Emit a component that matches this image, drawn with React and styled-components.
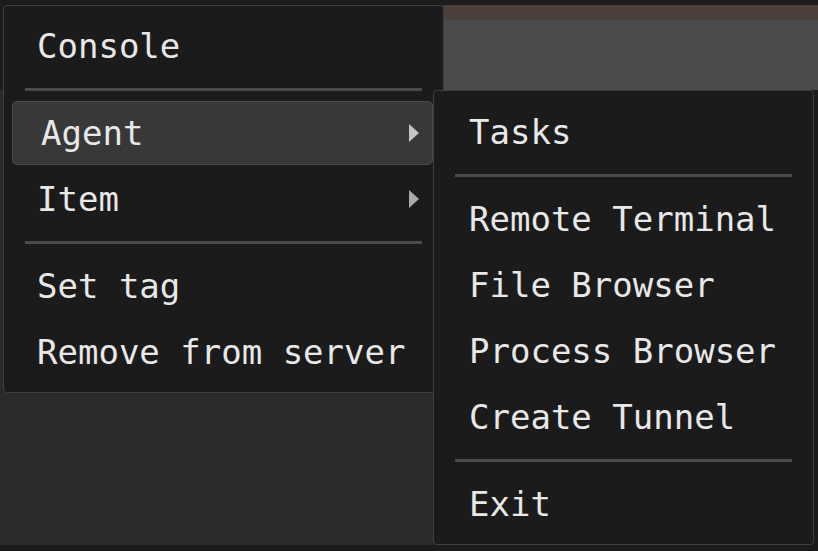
import React from 'react';
import styled, { createGlobalStyle } from 'styled-components';

const GlobalStyle = createGlobalStyle`
  html, body {
    margin: 0;
    padding: 0;
    background: #1b1b1b;
  }
  body {
    width: 818px;
    height: 551px;
    overflow: hidden;
    font-family: "DejaVu Sans Mono", "Liberation Mono", monospace;
  }
`;

const Screen = styled.div`
  position: relative;
  width: 818px;
  height: 551px;
  box-sizing: border-box;
  padding: 5px 0 6px;
  display: grid;
  grid-template-columns: 443px 1fr;
  grid-template-rows: 85px 1fr;
`;

const Blank = styled.div`
  background: #1b1b1b;
`;

const Viewport = styled.div`
  display: flex;
  flex-direction: column;
  background: #4a4a4a;
`;

const TitleStrip = styled.div`
  height: 15px;
  background: #4c403d;
`;

const Panel = styled.div`
  background: #2a2a2a;
`;

const Item = styled.div`
  height: 64px;
  margin: 1px 0;
  box-sizing: border-box;
  display: flex;
  align-items: center;
  justify-content: space-between;
  padding: 0 12px 0 ${(p) => (p.$active ? 28 : 24)}px;
  border: 1px solid ${(p) => (p.$active ? '#4a4a4a' : 'transparent')};
  border-radius: 5px;
  background: ${(p) => (p.$active ? '#383838' : 'transparent')};
  color: #e8e8e8;
  font-size: 34px;
  white-space: nowrap;
`;

const Menu = styled.div`
  position: absolute;
  left: ${(p) => p.$left}px;
  top: ${(p) => p.$top}px;
  width: ${(p) => p.$width}px;
  box-sizing: border-box;
  padding: ${(p) => p.$padTop}px 10px 7px 8px;
  background: #1b1b1b;
  border: 1px solid #3e3e3e;
  border-radius: 4px;
  display: flex;
  flex-direction: column;

  ${Item} > span {
    margin-left: ${(p) => p.$indent}px;
  }
`;

const Separator = styled.div`
  height: 3px;
  margin: 9px 11px 9px 13px;
  background: #4a4a4a;
`;

const Arrow = ({ color }) => (
  <svg width="12" height="20" viewBox="0 0 12 20">
    <path d="M1 1 L11 10 L1 19 Z" fill={color} />
  </svg>
);

const MenuEntry = ({ label, active, sub }) => (
  <Item $active={active}>
    <span>{label}</span>
    {sub && <Arrow color={active ? '#c4c4c4' : '#a9a9a9'} />}
  </Item>
);

export default function App() {
  return (
    <>
      <GlobalStyle />
      <Screen>
        <Blank />
        <Viewport>
          <TitleStrip />
        </Viewport>
        <Panel />
        <Blank />

        <Menu $left={3} $top={5} $width={441} $padTop={7} $indent={0}>
          <MenuEntry label="Console" />
          <Separator />
          <MenuEntry label="Agent" active sub />
          <MenuEntry label="Item" sub />
          <Separator />
          <MenuEntry label="Set tag" />
          <MenuEntry label="Remove from server" />
        </Menu>

        <Menu $left={433} $top={90} $width={381} $padTop={8} $indent={2}>
          <MenuEntry label="Tasks" />
          <Separator />
          <MenuEntry label="Remote Terminal" />
          <MenuEntry label="File Browser" />
          <MenuEntry label="Process Browser" />
          <MenuEntry label="Create Tunnel" />
          <Separator />
          <MenuEntry label="Exit" />
        </Menu>
      </Screen>
    </>
  );
}
